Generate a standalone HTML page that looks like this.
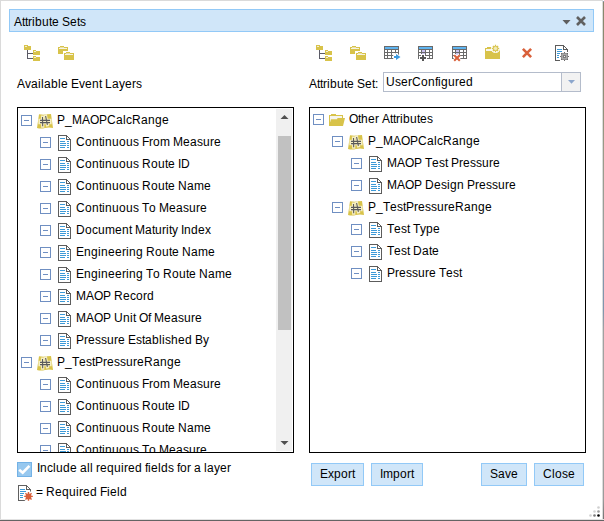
<!DOCTYPE html>
<html><head><meta charset="utf-8"><style>
html,body{margin:0;padding:0;width:604px;height:521px;overflow:hidden;background:#fff;position:relative}
.t i{display:inline-block;font-style:normal}
.t{position:absolute;font-family:"Liberation Sans",sans-serif;font-size:12px;line-height:14px;color:#000;white-space:nowrap}
.btn{position:absolute;top:463px;height:21px;border:1px solid #92c9f7;background:#d0e6f9;font-family:"Liberation Sans",sans-serif;font-size:12px;line-height:21px;text-align:center;color:#000}
svg{display:block}
</style></head><body>
<div style="position:absolute;left:0;top:0;width:604px;height:1px;background:#dadada"></div>
<div style="position:absolute;left:0;top:0;width:1px;height:521px;background:#dadada"></div>
<div style="position:absolute;left:602px;top:0;width:1px;height:521px;background:#dcdcdc"></div>
<div style="position:absolute;left:603px;top:0;width:1px;height:521px;background:linear-gradient(to bottom,#fff 0px,#fff 1px,#8898b0 1px,#8898b0 2px,#87876c 2px,#8f8f78 100px,#9a9a88 150px,#9aa0a0 240px,#8797aa 260px,#7f95ae 310px,#a0a0a0 330px,#a6a6a2 420px,#9a9a9a 500px,#707070 521px)"></div>
<div style="position:absolute;left:0;top:519px;width:604px;height:1px;background:#e2e2e2"></div>
<div style="position:absolute;left:0;top:520px;width:604px;height:1px;background:#646464"></div>
<div style="position:absolute;left:9px;top:9px;width:583px;height:21px;border:1px solid #92c9f7;background:#d0e6f9"></div>
<div class="t" style="left:14px;top:15px;"><i style="width:8px">A</i><i style="width:3px">t</i><i style="width:3px">t</i><i style="width:4px">r</i><i style="width:3px">i</i><i style="width:7px">b</i><i style="width:7px">u</i><i style="width:3px">t</i><i style="width:7px">e</i><i style="width:3px">&nbsp;</i><i style="width:8px">S</i><i style="width:7px">e</i><i style="width:3px">t</i><i style="width:6px">s</i></div>
<svg style="position:absolute;left:562px;top:20px" width="9" height="5" viewBox="0 0 9 5" shape-rendering="crispEdges" ><path d="M0.5 0 H8.5 L4.5 4.5 Z" fill="#5e5e5e" shape-rendering="auto"/></svg>
<svg style="position:absolute;left:575px;top:15px" width="12" height="12" viewBox="0 0 12 12"><path d="M2 2 L10 10 M10 2 L2 10" stroke="#606060" stroke-width="2.6"/></svg>
<svg style="position:absolute;left:24px;top:45px" width="17" height="16" viewBox="0 0 17 16" shape-rendering="crispEdges" ><rect x="0" y="0" width="4" height="1" fill="#d8c34a"/><rect x="0" y="1" width="7" height="4" fill="#d8c34a"/><rect x="1" y="1" width="2" height="1" fill="#f3eed2"/><rect x="3" y="5" width="1" height="9" fill="#5b5b66"/><rect x="4" y="8" width="5" height="1" fill="#5b5b66"/><rect x="4" y="13" width="5" height="1" fill="#5b5b66"/><rect x="9" y="5" width="3" height="1" fill="#d8c34a"/><rect x="9" y="6" width="7" height="4" fill="#d8c34a"/><rect x="10" y="6" width="2" height="1" fill="#f3eed2"/><rect x="9" y="11" width="3" height="1" fill="#d8c34a"/><rect x="9" y="12" width="7" height="4" fill="#d8c34a"/><rect x="10" y="12" width="2" height="1" fill="#f3eed2"/></svg>
<svg style="position:absolute;left:58px;top:46px" width="16" height="14" viewBox="0 0 16 14" shape-rendering="crispEdges" ><rect x="2" y="0" width="4" height="1" fill="#d8c34a"/><rect x="0" y="1" width="10" height="7" fill="#d8c34a"/><rect x="1" y="2" width="8" height="1" fill="#f6f3e4"/><rect x="2" y="1" width="4" height="1" fill="#e9e0a8"/><rect x="5" y="5" width="11" height="9" fill="#fff"/><rect x="8" y="6" width="4" height="1" fill="#d8c34a"/><rect x="6" y="7" width="10" height="7" fill="#d8c34a"/><rect x="7" y="8" width="8" height="1" fill="#f6f3e4"/><rect x="8" y="7" width="4" height="1" fill="#e9e0a8"/></svg>
<svg style="position:absolute;left:316px;top:45px" width="17" height="16" viewBox="0 0 17 16" shape-rendering="crispEdges" ><rect x="0" y="0" width="4" height="1" fill="#d8c34a"/><rect x="0" y="1" width="7" height="4" fill="#d8c34a"/><rect x="1" y="1" width="2" height="1" fill="#f3eed2"/><rect x="3" y="5" width="1" height="9" fill="#5b5b66"/><rect x="4" y="8" width="5" height="1" fill="#5b5b66"/><rect x="4" y="13" width="5" height="1" fill="#5b5b66"/><rect x="9" y="5" width="3" height="1" fill="#d8c34a"/><rect x="9" y="6" width="7" height="4" fill="#d8c34a"/><rect x="10" y="6" width="2" height="1" fill="#f3eed2"/><rect x="9" y="11" width="3" height="1" fill="#d8c34a"/><rect x="9" y="12" width="7" height="4" fill="#d8c34a"/><rect x="10" y="12" width="2" height="1" fill="#f3eed2"/></svg>
<svg style="position:absolute;left:350px;top:46px" width="16" height="14" viewBox="0 0 16 14" shape-rendering="crispEdges" ><rect x="2" y="0" width="4" height="1" fill="#d8c34a"/><rect x="0" y="1" width="10" height="7" fill="#d8c34a"/><rect x="1" y="2" width="8" height="1" fill="#f6f3e4"/><rect x="2" y="1" width="4" height="1" fill="#e9e0a8"/><rect x="5" y="5" width="11" height="9" fill="#fff"/><rect x="8" y="6" width="4" height="1" fill="#d8c34a"/><rect x="6" y="7" width="10" height="7" fill="#d8c34a"/><rect x="7" y="8" width="8" height="1" fill="#f6f3e4"/><rect x="8" y="7" width="4" height="1" fill="#e9e0a8"/></svg>
<svg style="position:absolute;left:384px;top:46px" width="15" height="13" viewBox="0 0 15 13" shape-rendering="crispEdges" ><rect x="0" y="0" width="15" height="13" fill="#6a6a6a"/><rect x="1" y="1" width="13" height="2" fill="#5fb4f0"/><rect x="1" y="4" width="2" height="2" fill="#ffffff"/><rect x="4" y="4" width="3" height="2" fill="#ffffff"/><rect x="8" y="4" width="3" height="2" fill="#ffffff"/><rect x="12" y="4" width="2" height="2" fill="#ffffff"/><rect x="1" y="7" width="2" height="2" fill="#ffffff"/><rect x="4" y="7" width="3" height="2" fill="#ffffff"/><rect x="8" y="7" width="3" height="2" fill="#ffffff"/><rect x="12" y="7" width="2" height="2" fill="#ffffff"/><rect x="1" y="10" width="2" height="2" fill="#ffffff"/><rect x="4" y="10" width="3" height="2" fill="#ffffff"/><rect x="8" y="10" width="3" height="2" fill="#ffffff"/><rect x="12" y="10" width="2" height="2" fill="#ffffff"/></svg>
<svg style="position:absolute;left:392px;top:52px" width="10" height="10" viewBox="0 0 10 10" shape-rendering="crispEdges" ><path d="M2 4 H4 V2 L8.5 5 L4 8 V6 H2 Z" fill="#fff" stroke="#fff" stroke-width="2" stroke-linejoin="round" shape-rendering="auto"/><path d="M2 4 H4 V2 L8.5 5 L4 8 V6 H2 Z" fill="#3b9ae0" shape-rendering="auto"/></svg>
<svg style="position:absolute;left:418px;top:46px" width="15" height="13" viewBox="0 0 15 13" shape-rendering="crispEdges" ><rect x="0" y="0" width="15" height="13" fill="#6a6a6a"/><rect x="1" y="1" width="13" height="2" fill="#5fb4f0"/><rect x="1" y="4" width="2" height="2" fill="#ffffff"/><rect x="4" y="4" width="3" height="2" fill="#cbc3ef"/><rect x="8" y="4" width="3" height="2" fill="#ffffff"/><rect x="12" y="4" width="2" height="2" fill="#ffffff"/><rect x="1" y="7" width="2" height="2" fill="#ffffff"/><rect x="4" y="7" width="3" height="2" fill="#cbc3ef"/><rect x="8" y="7" width="3" height="2" fill="#ffffff"/><rect x="12" y="7" width="2" height="2" fill="#ffffff"/><rect x="1" y="10" width="2" height="2" fill="#ffffff"/><rect x="4" y="10" width="3" height="2" fill="#ffffff"/><rect x="8" y="10" width="3" height="2" fill="#ffffff"/><rect x="12" y="10" width="2" height="2" fill="#ffffff"/></svg>
<svg style="position:absolute;left:419px;top:54px" width="8" height="8" viewBox="0 0 8 8" shape-rendering="crispEdges" ><rect x="0" y="2" width="8" height="4" fill="#fff"/><rect x="2" y="0" width="4" height="8" fill="#fff"/><rect x="1" y="3" width="6" height="2" fill="#555"/><rect x="3" y="1" width="2" height="6" fill="#555"/></svg>
<svg style="position:absolute;left:452px;top:46px" width="15" height="13" viewBox="0 0 15 13" shape-rendering="crispEdges" ><rect x="0" y="0" width="15" height="13" fill="#6a6a6a"/><rect x="1" y="1" width="13" height="2" fill="#5fb4f0"/><rect x="1" y="4" width="2" height="2" fill="#ffffff"/><rect x="4" y="4" width="3" height="2" fill="#cbc3ef"/><rect x="8" y="4" width="3" height="2" fill="#ffffff"/><rect x="12" y="4" width="2" height="2" fill="#ffffff"/><rect x="1" y="7" width="2" height="2" fill="#ffffff"/><rect x="4" y="7" width="3" height="2" fill="#cbc3ef"/><rect x="8" y="7" width="3" height="2" fill="#ffffff"/><rect x="12" y="7" width="2" height="2" fill="#ffffff"/><rect x="1" y="10" width="2" height="2" fill="#ffffff"/><rect x="4" y="10" width="3" height="2" fill="#ffffff"/><rect x="8" y="10" width="3" height="2" fill="#ffffff"/><rect x="12" y="10" width="2" height="2" fill="#ffffff"/></svg>
<svg style="position:absolute;left:453px;top:54px" width="8" height="8" viewBox="0 0 8 8"><path d="M1.2 1.2 L6.8 6.8 M6.8 1.2 L1.2 6.8" stroke="#fff" stroke-width="4.0" fill="none"/><path d="M1.2 1.2 L6.8 6.8 M6.8 1.2 L1.2 6.8" stroke="#d9603a" stroke-width="2.0" fill="none"/></svg>
<svg style="position:absolute;left:485px;top:47px;overflow:visible" width="15" height="12" viewBox="0 0 15 12"><path d="M0 1 H2 V0 H7 V1 H15 V12 H0 Z" fill="#d8c34a" shape-rendering="crispEdges"/><rect x="1" y="2" width="9" height="2" fill="#f7f6ee"/><circle cx="10.5" cy="1.5" r="4.6" fill="#fff"/><path d="M12.70 1.50 L14.20 1.50 M12.06 3.06 L13.12 4.12 M10.50 3.70 L10.50 5.20 M8.94 3.06 L7.88 4.12 M8.30 1.50 L6.80 1.50 M8.94 -0.06 L7.88 -1.12 M10.50 -0.70 L10.50 -2.20 M12.06 -0.06 L13.12 -1.12 " stroke="#d8c34a" stroke-width="1.3" fill="none"/><circle cx="10.5" cy="1.5" r="2.2" fill="#f1eab8" stroke="#d8c34a" stroke-width="1"/></svg>
<svg style="position:absolute;left:521px;top:47px" width="12" height="12" viewBox="0 0 12 12"><path d="M1.9 1.9 L10.1 10.1 M10.1 1.9 L1.9 10.1" stroke="#d9603a" stroke-width="2.6" fill="none"/></svg>
<svg style="position:absolute;left:555px;top:45px;overflow:visible" width="15" height="17" viewBox="0 0 15 17"><path d="M0 0 H8 L13 5 V16 H0 Z" fill="#fff" shape-rendering="crispEdges"/><g shape-rendering="crispEdges"><rect x="0" y="0" width="1" height="16" fill="#5c5c5c"/><rect x="0" y="15" width="13" height="1" fill="#5c5c5c"/><rect x="0" y="0" width="9" height="1" fill="#5c5c5c"/><rect x="12" y="4" width="1" height="12" fill="#5c5c5c"/><rect x="8" y="0" width="1" height="5" fill="#5c5c5c"/><rect x="8" y="4" width="5" height="1" fill="#5c5c5c"/></g><path d="M8.5 0.5 L12.5 4.5" stroke="#5c5c5c" stroke-width="1" fill="none" shape-rendering="auto"/><rect x="2" y="4" width="5" height="1" fill="#3d9ad8"/><rect x="2" y="6" width="6" height="1" fill="#3d9ad8"/><rect x="2" y="8" width="3" height="1" fill="#3d9ad8"/><rect x="2" y="10" width="2" height="1" fill="#3d9ad8"/><rect x="2" y="12" width="2" height="1" fill="#3d9ad8"/><g shape-rendering="crispEdges"><rect x="5" y="7" width="9" height="9" fill="#fff"/><rect x="4" y="9" width="11" height="5" fill="#fff"/><rect x="7" y="6" width="5" height="11" fill="#fff"/><rect x="6" y="8" width="7" height="7" fill="#a9a9a9"/><rect x="6" y="8" width="7" height="1" fill="#909090"/><rect x="6" y="14" width="7" height="1" fill="#909090"/><rect x="6" y="8" width="1" height="7" fill="#909090"/><rect x="12" y="8" width="1" height="7" fill="#909090"/><rect x="9" y="7" width="1" height="1" fill="#6a6a6a"/><rect x="9" y="15" width="1" height="1" fill="#6a6a6a"/><rect x="5" y="11" width="1" height="1" fill="#6a6a6a"/><rect x="13" y="11" width="1" height="1" fill="#6a6a6a"/><rect x="6" y="8" width="1" height="1" fill="#6a6a6a"/><rect x="12" y="8" width="1" height="1" fill="#6a6a6a"/><rect x="6" y="14" width="1" height="1" fill="#6a6a6a"/><rect x="12" y="14" width="1" height="1" fill="#6a6a6a"/><rect x="8" y="10" width="3" height="3" fill="#7c7c7c"/><rect x="9" y="11" width="1" height="1" fill="#f4f4f4"/></g></svg>
<div class="t" style="left:17px;top:77px;"><i style="width:8px">A</i><i style="width:6px">v</i><i style="width:7px">a</i><i style="width:3px">i</i><i style="width:3px">l</i><i style="width:7px">a</i><i style="width:7px">b</i><i style="width:3px">l</i><i style="width:7px">e</i><i style="width:3px">&nbsp;</i><i style="width:8px">E</i><i style="width:6px">v</i><i style="width:7px">e</i><i style="width:7px">n</i><i style="width:3px">t</i><i style="width:3px">&nbsp;</i><i style="width:7px">L</i><i style="width:7px">a</i><i style="width:6px">y</i><i style="width:7px">e</i><i style="width:4px">r</i><i style="width:6px">s</i></div>
<div class="t" style="left:309px;top:77px;"><i style="width:8px">A</i><i style="width:3px">t</i><i style="width:3px">t</i><i style="width:4px">r</i><i style="width:3px">i</i><i style="width:7px">b</i><i style="width:7px">u</i><i style="width:3px">t</i><i style="width:7px">e</i><i style="width:3px">&nbsp;</i><i style="width:8px">S</i><i style="width:7px">e</i><i style="width:3px">t</i><i style="width:3px">:</i></div>
<div style="position:absolute;left:383px;top:72px;width:196px;height:18px;border:1px solid #b4bccb;background:#fff"></div>
<div style="position:absolute;left:561px;top:73px;width:1px;height:18px;background:#b4bccb"></div>
<div style="position:absolute;left:562px;top:73px;width:18px;height:18px;background:#f2f2f2"></div>
<svg style="position:absolute;left:568px;top:80px" width="8" height="4" viewBox="0 0 8 4" shape-rendering="crispEdges" ><path d="M0 0 H7 L3.5 3.8 Z" fill="#8ca6cc" shape-rendering="auto"/></svg>
<div class="t" style="left:386px;top:75px;"><i style="width:9px">U</i><i style="width:6px">s</i><i style="width:7px">e</i><i style="width:4px">r</i><i style="width:9px">C</i><i style="width:7px">o</i><i style="width:7px">n</i><i style="width:3px">f</i><i style="width:3px">i</i><i style="width:7px">g</i><i style="width:7px">u</i><i style="width:4px">r</i><i style="width:7px">e</i><i style="width:7px">d</i></div>
<div style="position:absolute;left:17px;top:107px;width:275px;height:344px;border:1px solid #000;background:#fff"></div>
<div style="position:absolute;left:18px;top:108px;width:275px;height:344px;overflow:hidden"><svg style="position:absolute;left:3px;top:7px" width="11" height="11" viewBox="0 0 11 11" shape-rendering="crispEdges" ><rect x="0.5" y="0.5" width="10" height="10" fill="#fff" stroke="#6f8fc2" stroke-width="1"/><rect x="3" y="5" width="5" height="1" fill="#6f8fc2"/></svg><svg style="position:absolute;left:19px;top:6px" width="17" height="15" viewBox="0 0 17 15" shape-rendering="crispEdges" ><path d="M2 0.3 Q6 1 8 0.6 T14 0 L16 14 Q12 13 8 14 T0 14 Z" fill="#d8c34a" shape-rendering="auto"/><path d="M5.5 3 L5.7 12.2 M8.6 2 L10.4 10.8 M3 6.4 H13 M3 8.6 H13" stroke="#f5eec4" stroke-width="3.2" fill="none" stroke-linecap="square" shape-rendering="auto"/><path d="M5.5 3 L5.7 12.2 M8.6 2 L10.4 10.8 M3 6.4 H13 M3 8.6 H13" stroke="#5a5a5a" stroke-width="1.1" fill="none" shape-rendering="auto"/></svg><div class="t" style="left:39px;top:5px;"><i style="width:8px">P</i><i style="width:7px">_</i><i style="width:10px">M</i><i style="width:8px">A</i><i style="width:9px">O</i><i style="width:8px">P</i><i style="width:9px">C</i><i style="width:7px">a</i><i style="width:3px">l</i><i style="width:6px">c</i><i style="width:9px">R</i><i style="width:7px">a</i><i style="width:7px">n</i><i style="width:7px">g</i><i style="width:7px">e</i></div><svg style="position:absolute;left:22px;top:29px" width="11" height="11" viewBox="0 0 11 11" shape-rendering="crispEdges" ><rect x="0.5" y="0.5" width="10" height="10" fill="#fff" stroke="#6f8fc2" stroke-width="1"/><rect x="3" y="5" width="5" height="1" fill="#6f8fc2"/></svg><svg style="position:absolute;left:40px;top:27px" width="13" height="16" viewBox="0 0 13 16" shape-rendering="crispEdges" ><path d="M0 0 H8 L13 5 V16 H0 Z" fill="#fff" shape-rendering="crispEdges"/><g shape-rendering="crispEdges"><rect x="0" y="0" width="1" height="16" fill="#5c5c5c"/><rect x="0" y="15" width="13" height="1" fill="#5c5c5c"/><rect x="0" y="0" width="9" height="1" fill="#5c5c5c"/><rect x="12" y="4" width="1" height="12" fill="#5c5c5c"/><rect x="8" y="0" width="1" height="5" fill="#5c5c5c"/><rect x="8" y="4" width="5" height="1" fill="#5c5c5c"/></g><path d="M8.5 0.5 L12.5 4.5" stroke="#5c5c5c" stroke-width="1" fill="none" shape-rendering="auto"/><rect x="2" y="3" width="5" height="1" fill="#3d9ad8"/><rect x="2" y="6" width="5" height="1" fill="#3d9ad8"/><rect x="2" y="8" width="6" height="1" fill="#3d9ad8"/><rect x="2" y="10" width="6" height="1" fill="#3d9ad8"/><rect x="2" y="12" width="5" height="1" fill="#3d9ad8"/><rect x="9" y="6" width="2" height="1" fill="#3d9ad8"/><rect x="9" y="8" width="2" height="1" fill="#3d9ad8"/><rect x="9" y="10" width="2" height="1" fill="#3d9ad8"/><rect x="9" y="12" width="2" height="1" fill="#3d9ad8"/></svg><div class="t" style="left:58px;top:27px;"><i style="width:9px">C</i><i style="width:7px">o</i><i style="width:7px">n</i><i style="width:3px">t</i><i style="width:3px">i</i><i style="width:7px">n</i><i style="width:7px">u</i><i style="width:7px">o</i><i style="width:7px">u</i><i style="width:6px">s</i><i style="width:3px">&nbsp;</i><i style="width:7px">F</i><i style="width:4px">r</i><i style="width:7px">o</i><i style="width:10px">m</i><i style="width:3px">&nbsp;</i><i style="width:10px">M</i><i style="width:7px">e</i><i style="width:7px">a</i><i style="width:6px">s</i><i style="width:7px">u</i><i style="width:4px">r</i><i style="width:7px">e</i></div><svg style="position:absolute;left:22px;top:51px" width="11" height="11" viewBox="0 0 11 11" shape-rendering="crispEdges" ><rect x="0.5" y="0.5" width="10" height="10" fill="#fff" stroke="#6f8fc2" stroke-width="1"/><rect x="3" y="5" width="5" height="1" fill="#6f8fc2"/></svg><svg style="position:absolute;left:40px;top:49px" width="13" height="16" viewBox="0 0 13 16" shape-rendering="crispEdges" ><path d="M0 0 H8 L13 5 V16 H0 Z" fill="#fff" shape-rendering="crispEdges"/><g shape-rendering="crispEdges"><rect x="0" y="0" width="1" height="16" fill="#5c5c5c"/><rect x="0" y="15" width="13" height="1" fill="#5c5c5c"/><rect x="0" y="0" width="9" height="1" fill="#5c5c5c"/><rect x="12" y="4" width="1" height="12" fill="#5c5c5c"/><rect x="8" y="0" width="1" height="5" fill="#5c5c5c"/><rect x="8" y="4" width="5" height="1" fill="#5c5c5c"/></g><path d="M8.5 0.5 L12.5 4.5" stroke="#5c5c5c" stroke-width="1" fill="none" shape-rendering="auto"/><rect x="2" y="3" width="5" height="1" fill="#3d9ad8"/><rect x="2" y="6" width="5" height="1" fill="#3d9ad8"/><rect x="2" y="8" width="6" height="1" fill="#3d9ad8"/><rect x="2" y="10" width="6" height="1" fill="#3d9ad8"/><rect x="2" y="12" width="5" height="1" fill="#3d9ad8"/><rect x="9" y="6" width="2" height="1" fill="#3d9ad8"/><rect x="9" y="8" width="2" height="1" fill="#3d9ad8"/><rect x="9" y="10" width="2" height="1" fill="#3d9ad8"/><rect x="9" y="12" width="2" height="1" fill="#3d9ad8"/></svg><div class="t" style="left:58px;top:49px;"><i style="width:9px">C</i><i style="width:7px">o</i><i style="width:7px">n</i><i style="width:3px">t</i><i style="width:3px">i</i><i style="width:7px">n</i><i style="width:7px">u</i><i style="width:7px">o</i><i style="width:7px">u</i><i style="width:6px">s</i><i style="width:3px">&nbsp;</i><i style="width:9px">R</i><i style="width:7px">o</i><i style="width:7px">u</i><i style="width:3px">t</i><i style="width:7px">e</i><i style="width:3px">&nbsp;</i><i style="width:3px">I</i><i style="width:9px">D</i></div><svg style="position:absolute;left:22px;top:73px" width="11" height="11" viewBox="0 0 11 11" shape-rendering="crispEdges" ><rect x="0.5" y="0.5" width="10" height="10" fill="#fff" stroke="#6f8fc2" stroke-width="1"/><rect x="3" y="5" width="5" height="1" fill="#6f8fc2"/></svg><svg style="position:absolute;left:40px;top:71px" width="13" height="16" viewBox="0 0 13 16" shape-rendering="crispEdges" ><path d="M0 0 H8 L13 5 V16 H0 Z" fill="#fff" shape-rendering="crispEdges"/><g shape-rendering="crispEdges"><rect x="0" y="0" width="1" height="16" fill="#5c5c5c"/><rect x="0" y="15" width="13" height="1" fill="#5c5c5c"/><rect x="0" y="0" width="9" height="1" fill="#5c5c5c"/><rect x="12" y="4" width="1" height="12" fill="#5c5c5c"/><rect x="8" y="0" width="1" height="5" fill="#5c5c5c"/><rect x="8" y="4" width="5" height="1" fill="#5c5c5c"/></g><path d="M8.5 0.5 L12.5 4.5" stroke="#5c5c5c" stroke-width="1" fill="none" shape-rendering="auto"/><rect x="2" y="3" width="5" height="1" fill="#3d9ad8"/><rect x="2" y="6" width="5" height="1" fill="#3d9ad8"/><rect x="2" y="8" width="6" height="1" fill="#3d9ad8"/><rect x="2" y="10" width="6" height="1" fill="#3d9ad8"/><rect x="2" y="12" width="5" height="1" fill="#3d9ad8"/><rect x="9" y="6" width="2" height="1" fill="#3d9ad8"/><rect x="9" y="8" width="2" height="1" fill="#3d9ad8"/><rect x="9" y="10" width="2" height="1" fill="#3d9ad8"/><rect x="9" y="12" width="2" height="1" fill="#3d9ad8"/></svg><div class="t" style="left:58px;top:71px;"><i style="width:9px">C</i><i style="width:7px">o</i><i style="width:7px">n</i><i style="width:3px">t</i><i style="width:3px">i</i><i style="width:7px">n</i><i style="width:7px">u</i><i style="width:7px">o</i><i style="width:7px">u</i><i style="width:6px">s</i><i style="width:3px">&nbsp;</i><i style="width:9px">R</i><i style="width:7px">o</i><i style="width:7px">u</i><i style="width:3px">t</i><i style="width:7px">e</i><i style="width:3px">&nbsp;</i><i style="width:9px">N</i><i style="width:7px">a</i><i style="width:10px">m</i><i style="width:7px">e</i></div><svg style="position:absolute;left:22px;top:95px" width="11" height="11" viewBox="0 0 11 11" shape-rendering="crispEdges" ><rect x="0.5" y="0.5" width="10" height="10" fill="#fff" stroke="#6f8fc2" stroke-width="1"/><rect x="3" y="5" width="5" height="1" fill="#6f8fc2"/></svg><svg style="position:absolute;left:40px;top:93px" width="13" height="16" viewBox="0 0 13 16" shape-rendering="crispEdges" ><path d="M0 0 H8 L13 5 V16 H0 Z" fill="#fff" shape-rendering="crispEdges"/><g shape-rendering="crispEdges"><rect x="0" y="0" width="1" height="16" fill="#5c5c5c"/><rect x="0" y="15" width="13" height="1" fill="#5c5c5c"/><rect x="0" y="0" width="9" height="1" fill="#5c5c5c"/><rect x="12" y="4" width="1" height="12" fill="#5c5c5c"/><rect x="8" y="0" width="1" height="5" fill="#5c5c5c"/><rect x="8" y="4" width="5" height="1" fill="#5c5c5c"/></g><path d="M8.5 0.5 L12.5 4.5" stroke="#5c5c5c" stroke-width="1" fill="none" shape-rendering="auto"/><rect x="2" y="3" width="5" height="1" fill="#3d9ad8"/><rect x="2" y="6" width="5" height="1" fill="#3d9ad8"/><rect x="2" y="8" width="6" height="1" fill="#3d9ad8"/><rect x="2" y="10" width="6" height="1" fill="#3d9ad8"/><rect x="2" y="12" width="5" height="1" fill="#3d9ad8"/><rect x="9" y="6" width="2" height="1" fill="#3d9ad8"/><rect x="9" y="8" width="2" height="1" fill="#3d9ad8"/><rect x="9" y="10" width="2" height="1" fill="#3d9ad8"/><rect x="9" y="12" width="2" height="1" fill="#3d9ad8"/></svg><div class="t" style="left:58px;top:93px;"><i style="width:9px">C</i><i style="width:7px">o</i><i style="width:7px">n</i><i style="width:3px">t</i><i style="width:3px">i</i><i style="width:7px">n</i><i style="width:7px">u</i><i style="width:7px">o</i><i style="width:7px">u</i><i style="width:6px">s</i><i style="width:3px">&nbsp;</i><i style="width:7px">T</i><i style="width:7px">o</i><i style="width:3px">&nbsp;</i><i style="width:10px">M</i><i style="width:7px">e</i><i style="width:7px">a</i><i style="width:6px">s</i><i style="width:7px">u</i><i style="width:4px">r</i><i style="width:7px">e</i></div><svg style="position:absolute;left:22px;top:117px" width="11" height="11" viewBox="0 0 11 11" shape-rendering="crispEdges" ><rect x="0.5" y="0.5" width="10" height="10" fill="#fff" stroke="#6f8fc2" stroke-width="1"/><rect x="3" y="5" width="5" height="1" fill="#6f8fc2"/></svg><svg style="position:absolute;left:40px;top:115px" width="13" height="16" viewBox="0 0 13 16" shape-rendering="crispEdges" ><path d="M0 0 H8 L13 5 V16 H0 Z" fill="#fff" shape-rendering="crispEdges"/><g shape-rendering="crispEdges"><rect x="0" y="0" width="1" height="16" fill="#5c5c5c"/><rect x="0" y="15" width="13" height="1" fill="#5c5c5c"/><rect x="0" y="0" width="9" height="1" fill="#5c5c5c"/><rect x="12" y="4" width="1" height="12" fill="#5c5c5c"/><rect x="8" y="0" width="1" height="5" fill="#5c5c5c"/><rect x="8" y="4" width="5" height="1" fill="#5c5c5c"/></g><path d="M8.5 0.5 L12.5 4.5" stroke="#5c5c5c" stroke-width="1" fill="none" shape-rendering="auto"/><rect x="2" y="3" width="5" height="1" fill="#3d9ad8"/><rect x="2" y="6" width="5" height="1" fill="#3d9ad8"/><rect x="2" y="8" width="6" height="1" fill="#3d9ad8"/><rect x="2" y="10" width="6" height="1" fill="#3d9ad8"/><rect x="2" y="12" width="5" height="1" fill="#3d9ad8"/><rect x="9" y="6" width="2" height="1" fill="#3d9ad8"/><rect x="9" y="8" width="2" height="1" fill="#3d9ad8"/><rect x="9" y="10" width="2" height="1" fill="#3d9ad8"/><rect x="9" y="12" width="2" height="1" fill="#3d9ad8"/></svg><div class="t" style="left:58px;top:115px;"><i style="width:9px">D</i><i style="width:7px">o</i><i style="width:6px">c</i><i style="width:7px">u</i><i style="width:10px">m</i><i style="width:7px">e</i><i style="width:7px">n</i><i style="width:3px">t</i><i style="width:3px">&nbsp;</i><i style="width:10px">M</i><i style="width:7px">a</i><i style="width:3px">t</i><i style="width:7px">u</i><i style="width:4px">r</i><i style="width:3px">i</i><i style="width:3px">t</i><i style="width:6px">y</i><i style="width:3px">&nbsp;</i><i style="width:3px">I</i><i style="width:7px">n</i><i style="width:7px">d</i><i style="width:7px">e</i><i style="width:6px">x</i></div><svg style="position:absolute;left:22px;top:139px" width="11" height="11" viewBox="0 0 11 11" shape-rendering="crispEdges" ><rect x="0.5" y="0.5" width="10" height="10" fill="#fff" stroke="#6f8fc2" stroke-width="1"/><rect x="3" y="5" width="5" height="1" fill="#6f8fc2"/></svg><svg style="position:absolute;left:40px;top:137px" width="13" height="16" viewBox="0 0 13 16" shape-rendering="crispEdges" ><path d="M0 0 H8 L13 5 V16 H0 Z" fill="#fff" shape-rendering="crispEdges"/><g shape-rendering="crispEdges"><rect x="0" y="0" width="1" height="16" fill="#5c5c5c"/><rect x="0" y="15" width="13" height="1" fill="#5c5c5c"/><rect x="0" y="0" width="9" height="1" fill="#5c5c5c"/><rect x="12" y="4" width="1" height="12" fill="#5c5c5c"/><rect x="8" y="0" width="1" height="5" fill="#5c5c5c"/><rect x="8" y="4" width="5" height="1" fill="#5c5c5c"/></g><path d="M8.5 0.5 L12.5 4.5" stroke="#5c5c5c" stroke-width="1" fill="none" shape-rendering="auto"/><rect x="2" y="3" width="5" height="1" fill="#3d9ad8"/><rect x="2" y="6" width="5" height="1" fill="#3d9ad8"/><rect x="2" y="8" width="6" height="1" fill="#3d9ad8"/><rect x="2" y="10" width="6" height="1" fill="#3d9ad8"/><rect x="2" y="12" width="5" height="1" fill="#3d9ad8"/><rect x="9" y="6" width="2" height="1" fill="#3d9ad8"/><rect x="9" y="8" width="2" height="1" fill="#3d9ad8"/><rect x="9" y="10" width="2" height="1" fill="#3d9ad8"/><rect x="9" y="12" width="2" height="1" fill="#3d9ad8"/></svg><div class="t" style="left:58px;top:137px;"><i style="width:8px">E</i><i style="width:7px">n</i><i style="width:7px">g</i><i style="width:3px">i</i><i style="width:7px">n</i><i style="width:7px">e</i><i style="width:7px">e</i><i style="width:4px">r</i><i style="width:3px">i</i><i style="width:7px">n</i><i style="width:7px">g</i><i style="width:3px">&nbsp;</i><i style="width:9px">R</i><i style="width:7px">o</i><i style="width:7px">u</i><i style="width:3px">t</i><i style="width:7px">e</i><i style="width:3px">&nbsp;</i><i style="width:9px">N</i><i style="width:7px">a</i><i style="width:10px">m</i><i style="width:7px">e</i></div><svg style="position:absolute;left:22px;top:161px" width="11" height="11" viewBox="0 0 11 11" shape-rendering="crispEdges" ><rect x="0.5" y="0.5" width="10" height="10" fill="#fff" stroke="#6f8fc2" stroke-width="1"/><rect x="3" y="5" width="5" height="1" fill="#6f8fc2"/></svg><svg style="position:absolute;left:40px;top:159px" width="13" height="16" viewBox="0 0 13 16" shape-rendering="crispEdges" ><path d="M0 0 H8 L13 5 V16 H0 Z" fill="#fff" shape-rendering="crispEdges"/><g shape-rendering="crispEdges"><rect x="0" y="0" width="1" height="16" fill="#5c5c5c"/><rect x="0" y="15" width="13" height="1" fill="#5c5c5c"/><rect x="0" y="0" width="9" height="1" fill="#5c5c5c"/><rect x="12" y="4" width="1" height="12" fill="#5c5c5c"/><rect x="8" y="0" width="1" height="5" fill="#5c5c5c"/><rect x="8" y="4" width="5" height="1" fill="#5c5c5c"/></g><path d="M8.5 0.5 L12.5 4.5" stroke="#5c5c5c" stroke-width="1" fill="none" shape-rendering="auto"/><rect x="2" y="3" width="5" height="1" fill="#3d9ad8"/><rect x="2" y="6" width="5" height="1" fill="#3d9ad8"/><rect x="2" y="8" width="6" height="1" fill="#3d9ad8"/><rect x="2" y="10" width="6" height="1" fill="#3d9ad8"/><rect x="2" y="12" width="5" height="1" fill="#3d9ad8"/><rect x="9" y="6" width="2" height="1" fill="#3d9ad8"/><rect x="9" y="8" width="2" height="1" fill="#3d9ad8"/><rect x="9" y="10" width="2" height="1" fill="#3d9ad8"/><rect x="9" y="12" width="2" height="1" fill="#3d9ad8"/></svg><div class="t" style="left:58px;top:159px;"><i style="width:8px">E</i><i style="width:7px">n</i><i style="width:7px">g</i><i style="width:3px">i</i><i style="width:7px">n</i><i style="width:7px">e</i><i style="width:7px">e</i><i style="width:4px">r</i><i style="width:3px">i</i><i style="width:7px">n</i><i style="width:7px">g</i><i style="width:3px">&nbsp;</i><i style="width:7px">T</i><i style="width:7px">o</i><i style="width:3px">&nbsp;</i><i style="width:9px">R</i><i style="width:7px">o</i><i style="width:7px">u</i><i style="width:3px">t</i><i style="width:7px">e</i><i style="width:3px">&nbsp;</i><i style="width:9px">N</i><i style="width:7px">a</i><i style="width:10px">m</i><i style="width:7px">e</i></div><svg style="position:absolute;left:22px;top:183px" width="11" height="11" viewBox="0 0 11 11" shape-rendering="crispEdges" ><rect x="0.5" y="0.5" width="10" height="10" fill="#fff" stroke="#6f8fc2" stroke-width="1"/><rect x="3" y="5" width="5" height="1" fill="#6f8fc2"/></svg><svg style="position:absolute;left:40px;top:181px" width="13" height="16" viewBox="0 0 13 16" shape-rendering="crispEdges" ><path d="M0 0 H8 L13 5 V16 H0 Z" fill="#fff" shape-rendering="crispEdges"/><g shape-rendering="crispEdges"><rect x="0" y="0" width="1" height="16" fill="#5c5c5c"/><rect x="0" y="15" width="13" height="1" fill="#5c5c5c"/><rect x="0" y="0" width="9" height="1" fill="#5c5c5c"/><rect x="12" y="4" width="1" height="12" fill="#5c5c5c"/><rect x="8" y="0" width="1" height="5" fill="#5c5c5c"/><rect x="8" y="4" width="5" height="1" fill="#5c5c5c"/></g><path d="M8.5 0.5 L12.5 4.5" stroke="#5c5c5c" stroke-width="1" fill="none" shape-rendering="auto"/><rect x="2" y="3" width="5" height="1" fill="#3d9ad8"/><rect x="2" y="6" width="5" height="1" fill="#3d9ad8"/><rect x="2" y="8" width="6" height="1" fill="#3d9ad8"/><rect x="2" y="10" width="6" height="1" fill="#3d9ad8"/><rect x="2" y="12" width="5" height="1" fill="#3d9ad8"/><rect x="9" y="6" width="2" height="1" fill="#3d9ad8"/><rect x="9" y="8" width="2" height="1" fill="#3d9ad8"/><rect x="9" y="10" width="2" height="1" fill="#3d9ad8"/><rect x="9" y="12" width="2" height="1" fill="#3d9ad8"/></svg><div class="t" style="left:58px;top:181px;"><i style="width:10px">M</i><i style="width:8px">A</i><i style="width:9px">O</i><i style="width:8px">P</i><i style="width:3px">&nbsp;</i><i style="width:9px">R</i><i style="width:7px">e</i><i style="width:6px">c</i><i style="width:7px">o</i><i style="width:4px">r</i><i style="width:7px">d</i></div><svg style="position:absolute;left:22px;top:205px" width="11" height="11" viewBox="0 0 11 11" shape-rendering="crispEdges" ><rect x="0.5" y="0.5" width="10" height="10" fill="#fff" stroke="#6f8fc2" stroke-width="1"/><rect x="3" y="5" width="5" height="1" fill="#6f8fc2"/></svg><svg style="position:absolute;left:40px;top:203px" width="13" height="16" viewBox="0 0 13 16" shape-rendering="crispEdges" ><path d="M0 0 H8 L13 5 V16 H0 Z" fill="#fff" shape-rendering="crispEdges"/><g shape-rendering="crispEdges"><rect x="0" y="0" width="1" height="16" fill="#5c5c5c"/><rect x="0" y="15" width="13" height="1" fill="#5c5c5c"/><rect x="0" y="0" width="9" height="1" fill="#5c5c5c"/><rect x="12" y="4" width="1" height="12" fill="#5c5c5c"/><rect x="8" y="0" width="1" height="5" fill="#5c5c5c"/><rect x="8" y="4" width="5" height="1" fill="#5c5c5c"/></g><path d="M8.5 0.5 L12.5 4.5" stroke="#5c5c5c" stroke-width="1" fill="none" shape-rendering="auto"/><rect x="2" y="3" width="5" height="1" fill="#3d9ad8"/><rect x="2" y="6" width="5" height="1" fill="#3d9ad8"/><rect x="2" y="8" width="6" height="1" fill="#3d9ad8"/><rect x="2" y="10" width="6" height="1" fill="#3d9ad8"/><rect x="2" y="12" width="5" height="1" fill="#3d9ad8"/><rect x="9" y="6" width="2" height="1" fill="#3d9ad8"/><rect x="9" y="8" width="2" height="1" fill="#3d9ad8"/><rect x="9" y="10" width="2" height="1" fill="#3d9ad8"/><rect x="9" y="12" width="2" height="1" fill="#3d9ad8"/></svg><div class="t" style="left:58px;top:203px;"><i style="width:10px">M</i><i style="width:8px">A</i><i style="width:9px">O</i><i style="width:8px">P</i><i style="width:3px">&nbsp;</i><i style="width:9px">U</i><i style="width:7px">n</i><i style="width:3px">i</i><i style="width:3px">t</i><i style="width:3px">&nbsp;</i><i style="width:9px">O</i><i style="width:3px">f</i><i style="width:3px">&nbsp;</i><i style="width:10px">M</i><i style="width:7px">e</i><i style="width:7px">a</i><i style="width:6px">s</i><i style="width:7px">u</i><i style="width:4px">r</i><i style="width:7px">e</i></div><svg style="position:absolute;left:22px;top:227px" width="11" height="11" viewBox="0 0 11 11" shape-rendering="crispEdges" ><rect x="0.5" y="0.5" width="10" height="10" fill="#fff" stroke="#6f8fc2" stroke-width="1"/><rect x="3" y="5" width="5" height="1" fill="#6f8fc2"/></svg><svg style="position:absolute;left:40px;top:225px" width="13" height="16" viewBox="0 0 13 16" shape-rendering="crispEdges" ><path d="M0 0 H8 L13 5 V16 H0 Z" fill="#fff" shape-rendering="crispEdges"/><g shape-rendering="crispEdges"><rect x="0" y="0" width="1" height="16" fill="#5c5c5c"/><rect x="0" y="15" width="13" height="1" fill="#5c5c5c"/><rect x="0" y="0" width="9" height="1" fill="#5c5c5c"/><rect x="12" y="4" width="1" height="12" fill="#5c5c5c"/><rect x="8" y="0" width="1" height="5" fill="#5c5c5c"/><rect x="8" y="4" width="5" height="1" fill="#5c5c5c"/></g><path d="M8.5 0.5 L12.5 4.5" stroke="#5c5c5c" stroke-width="1" fill="none" shape-rendering="auto"/><rect x="2" y="3" width="5" height="1" fill="#3d9ad8"/><rect x="2" y="6" width="5" height="1" fill="#3d9ad8"/><rect x="2" y="8" width="6" height="1" fill="#3d9ad8"/><rect x="2" y="10" width="6" height="1" fill="#3d9ad8"/><rect x="2" y="12" width="5" height="1" fill="#3d9ad8"/><rect x="9" y="6" width="2" height="1" fill="#3d9ad8"/><rect x="9" y="8" width="2" height="1" fill="#3d9ad8"/><rect x="9" y="10" width="2" height="1" fill="#3d9ad8"/><rect x="9" y="12" width="2" height="1" fill="#3d9ad8"/></svg><div class="t" style="left:58px;top:225px;"><i style="width:8px">P</i><i style="width:4px">r</i><i style="width:7px">e</i><i style="width:6px">s</i><i style="width:6px">s</i><i style="width:7px">u</i><i style="width:4px">r</i><i style="width:7px">e</i><i style="width:3px">&nbsp;</i><i style="width:8px">E</i><i style="width:6px">s</i><i style="width:3px">t</i><i style="width:7px">a</i><i style="width:7px">b</i><i style="width:3px">l</i><i style="width:3px">i</i><i style="width:6px">s</i><i style="width:7px">h</i><i style="width:7px">e</i><i style="width:7px">d</i><i style="width:3px">&nbsp;</i><i style="width:8px">B</i><i style="width:6px">y</i></div><svg style="position:absolute;left:3px;top:249px" width="11" height="11" viewBox="0 0 11 11" shape-rendering="crispEdges" ><rect x="0.5" y="0.5" width="10" height="10" fill="#fff" stroke="#6f8fc2" stroke-width="1"/><rect x="3" y="5" width="5" height="1" fill="#6f8fc2"/></svg><svg style="position:absolute;left:19px;top:248px" width="17" height="15" viewBox="0 0 17 15" shape-rendering="crispEdges" ><path d="M2 0.3 Q6 1 8 0.6 T14 0 L16 14 Q12 13 8 14 T0 14 Z" fill="#d8c34a" shape-rendering="auto"/><path d="M5.5 3 L5.7 12.2 M8.6 2 L10.4 10.8 M3 6.4 H13 M3 8.6 H13" stroke="#f5eec4" stroke-width="3.2" fill="none" stroke-linecap="square" shape-rendering="auto"/><path d="M5.5 3 L5.7 12.2 M8.6 2 L10.4 10.8 M3 6.4 H13 M3 8.6 H13" stroke="#5a5a5a" stroke-width="1.1" fill="none" shape-rendering="auto"/></svg><div class="t" style="left:39px;top:247px;"><i style="width:8px">P</i><i style="width:7px">_</i><i style="width:7px">T</i><i style="width:7px">e</i><i style="width:6px">s</i><i style="width:3px">t</i><i style="width:8px">P</i><i style="width:4px">r</i><i style="width:7px">e</i><i style="width:6px">s</i><i style="width:6px">s</i><i style="width:7px">u</i><i style="width:4px">r</i><i style="width:7px">e</i><i style="width:9px">R</i><i style="width:7px">a</i><i style="width:7px">n</i><i style="width:7px">g</i><i style="width:7px">e</i></div><svg style="position:absolute;left:22px;top:271px" width="11" height="11" viewBox="0 0 11 11" shape-rendering="crispEdges" ><rect x="0.5" y="0.5" width="10" height="10" fill="#fff" stroke="#6f8fc2" stroke-width="1"/><rect x="3" y="5" width="5" height="1" fill="#6f8fc2"/></svg><svg style="position:absolute;left:40px;top:269px" width="13" height="16" viewBox="0 0 13 16" shape-rendering="crispEdges" ><path d="M0 0 H8 L13 5 V16 H0 Z" fill="#fff" shape-rendering="crispEdges"/><g shape-rendering="crispEdges"><rect x="0" y="0" width="1" height="16" fill="#5c5c5c"/><rect x="0" y="15" width="13" height="1" fill="#5c5c5c"/><rect x="0" y="0" width="9" height="1" fill="#5c5c5c"/><rect x="12" y="4" width="1" height="12" fill="#5c5c5c"/><rect x="8" y="0" width="1" height="5" fill="#5c5c5c"/><rect x="8" y="4" width="5" height="1" fill="#5c5c5c"/></g><path d="M8.5 0.5 L12.5 4.5" stroke="#5c5c5c" stroke-width="1" fill="none" shape-rendering="auto"/><rect x="2" y="3" width="5" height="1" fill="#3d9ad8"/><rect x="2" y="6" width="5" height="1" fill="#3d9ad8"/><rect x="2" y="8" width="6" height="1" fill="#3d9ad8"/><rect x="2" y="10" width="6" height="1" fill="#3d9ad8"/><rect x="2" y="12" width="5" height="1" fill="#3d9ad8"/><rect x="9" y="6" width="2" height="1" fill="#3d9ad8"/><rect x="9" y="8" width="2" height="1" fill="#3d9ad8"/><rect x="9" y="10" width="2" height="1" fill="#3d9ad8"/><rect x="9" y="12" width="2" height="1" fill="#3d9ad8"/></svg><div class="t" style="left:58px;top:269px;"><i style="width:9px">C</i><i style="width:7px">o</i><i style="width:7px">n</i><i style="width:3px">t</i><i style="width:3px">i</i><i style="width:7px">n</i><i style="width:7px">u</i><i style="width:7px">o</i><i style="width:7px">u</i><i style="width:6px">s</i><i style="width:3px">&nbsp;</i><i style="width:7px">F</i><i style="width:4px">r</i><i style="width:7px">o</i><i style="width:10px">m</i><i style="width:3px">&nbsp;</i><i style="width:10px">M</i><i style="width:7px">e</i><i style="width:7px">a</i><i style="width:6px">s</i><i style="width:7px">u</i><i style="width:4px">r</i><i style="width:7px">e</i></div><svg style="position:absolute;left:22px;top:293px" width="11" height="11" viewBox="0 0 11 11" shape-rendering="crispEdges" ><rect x="0.5" y="0.5" width="10" height="10" fill="#fff" stroke="#6f8fc2" stroke-width="1"/><rect x="3" y="5" width="5" height="1" fill="#6f8fc2"/></svg><svg style="position:absolute;left:40px;top:291px" width="13" height="16" viewBox="0 0 13 16" shape-rendering="crispEdges" ><path d="M0 0 H8 L13 5 V16 H0 Z" fill="#fff" shape-rendering="crispEdges"/><g shape-rendering="crispEdges"><rect x="0" y="0" width="1" height="16" fill="#5c5c5c"/><rect x="0" y="15" width="13" height="1" fill="#5c5c5c"/><rect x="0" y="0" width="9" height="1" fill="#5c5c5c"/><rect x="12" y="4" width="1" height="12" fill="#5c5c5c"/><rect x="8" y="0" width="1" height="5" fill="#5c5c5c"/><rect x="8" y="4" width="5" height="1" fill="#5c5c5c"/></g><path d="M8.5 0.5 L12.5 4.5" stroke="#5c5c5c" stroke-width="1" fill="none" shape-rendering="auto"/><rect x="2" y="3" width="5" height="1" fill="#3d9ad8"/><rect x="2" y="6" width="5" height="1" fill="#3d9ad8"/><rect x="2" y="8" width="6" height="1" fill="#3d9ad8"/><rect x="2" y="10" width="6" height="1" fill="#3d9ad8"/><rect x="2" y="12" width="5" height="1" fill="#3d9ad8"/><rect x="9" y="6" width="2" height="1" fill="#3d9ad8"/><rect x="9" y="8" width="2" height="1" fill="#3d9ad8"/><rect x="9" y="10" width="2" height="1" fill="#3d9ad8"/><rect x="9" y="12" width="2" height="1" fill="#3d9ad8"/></svg><div class="t" style="left:58px;top:291px;"><i style="width:9px">C</i><i style="width:7px">o</i><i style="width:7px">n</i><i style="width:3px">t</i><i style="width:3px">i</i><i style="width:7px">n</i><i style="width:7px">u</i><i style="width:7px">o</i><i style="width:7px">u</i><i style="width:6px">s</i><i style="width:3px">&nbsp;</i><i style="width:9px">R</i><i style="width:7px">o</i><i style="width:7px">u</i><i style="width:3px">t</i><i style="width:7px">e</i><i style="width:3px">&nbsp;</i><i style="width:3px">I</i><i style="width:9px">D</i></div><svg style="position:absolute;left:22px;top:315px" width="11" height="11" viewBox="0 0 11 11" shape-rendering="crispEdges" ><rect x="0.5" y="0.5" width="10" height="10" fill="#fff" stroke="#6f8fc2" stroke-width="1"/><rect x="3" y="5" width="5" height="1" fill="#6f8fc2"/></svg><svg style="position:absolute;left:40px;top:313px" width="13" height="16" viewBox="0 0 13 16" shape-rendering="crispEdges" ><path d="M0 0 H8 L13 5 V16 H0 Z" fill="#fff" shape-rendering="crispEdges"/><g shape-rendering="crispEdges"><rect x="0" y="0" width="1" height="16" fill="#5c5c5c"/><rect x="0" y="15" width="13" height="1" fill="#5c5c5c"/><rect x="0" y="0" width="9" height="1" fill="#5c5c5c"/><rect x="12" y="4" width="1" height="12" fill="#5c5c5c"/><rect x="8" y="0" width="1" height="5" fill="#5c5c5c"/><rect x="8" y="4" width="5" height="1" fill="#5c5c5c"/></g><path d="M8.5 0.5 L12.5 4.5" stroke="#5c5c5c" stroke-width="1" fill="none" shape-rendering="auto"/><rect x="2" y="3" width="5" height="1" fill="#3d9ad8"/><rect x="2" y="6" width="5" height="1" fill="#3d9ad8"/><rect x="2" y="8" width="6" height="1" fill="#3d9ad8"/><rect x="2" y="10" width="6" height="1" fill="#3d9ad8"/><rect x="2" y="12" width="5" height="1" fill="#3d9ad8"/><rect x="9" y="6" width="2" height="1" fill="#3d9ad8"/><rect x="9" y="8" width="2" height="1" fill="#3d9ad8"/><rect x="9" y="10" width="2" height="1" fill="#3d9ad8"/><rect x="9" y="12" width="2" height="1" fill="#3d9ad8"/></svg><div class="t" style="left:58px;top:313px;"><i style="width:9px">C</i><i style="width:7px">o</i><i style="width:7px">n</i><i style="width:3px">t</i><i style="width:3px">i</i><i style="width:7px">n</i><i style="width:7px">u</i><i style="width:7px">o</i><i style="width:7px">u</i><i style="width:6px">s</i><i style="width:3px">&nbsp;</i><i style="width:9px">R</i><i style="width:7px">o</i><i style="width:7px">u</i><i style="width:3px">t</i><i style="width:7px">e</i><i style="width:3px">&nbsp;</i><i style="width:9px">N</i><i style="width:7px">a</i><i style="width:10px">m</i><i style="width:7px">e</i></div><svg style="position:absolute;left:22px;top:337px" width="11" height="11" viewBox="0 0 11 11" shape-rendering="crispEdges" ><rect x="0.5" y="0.5" width="10" height="10" fill="#fff" stroke="#6f8fc2" stroke-width="1"/><rect x="3" y="5" width="5" height="1" fill="#6f8fc2"/></svg><svg style="position:absolute;left:40px;top:335px" width="13" height="16" viewBox="0 0 13 16" shape-rendering="crispEdges" ><path d="M0 0 H8 L13 5 V16 H0 Z" fill="#fff" shape-rendering="crispEdges"/><g shape-rendering="crispEdges"><rect x="0" y="0" width="1" height="16" fill="#5c5c5c"/><rect x="0" y="15" width="13" height="1" fill="#5c5c5c"/><rect x="0" y="0" width="9" height="1" fill="#5c5c5c"/><rect x="12" y="4" width="1" height="12" fill="#5c5c5c"/><rect x="8" y="0" width="1" height="5" fill="#5c5c5c"/><rect x="8" y="4" width="5" height="1" fill="#5c5c5c"/></g><path d="M8.5 0.5 L12.5 4.5" stroke="#5c5c5c" stroke-width="1" fill="none" shape-rendering="auto"/><rect x="2" y="3" width="5" height="1" fill="#3d9ad8"/><rect x="2" y="6" width="5" height="1" fill="#3d9ad8"/><rect x="2" y="8" width="6" height="1" fill="#3d9ad8"/><rect x="2" y="10" width="6" height="1" fill="#3d9ad8"/><rect x="2" y="12" width="5" height="1" fill="#3d9ad8"/><rect x="9" y="6" width="2" height="1" fill="#3d9ad8"/><rect x="9" y="8" width="2" height="1" fill="#3d9ad8"/><rect x="9" y="10" width="2" height="1" fill="#3d9ad8"/><rect x="9" y="12" width="2" height="1" fill="#3d9ad8"/></svg><div class="t" style="left:58px;top:335px;"><i style="width:9px">C</i><i style="width:7px">o</i><i style="width:7px">n</i><i style="width:3px">t</i><i style="width:3px">i</i><i style="width:7px">n</i><i style="width:7px">u</i><i style="width:7px">o</i><i style="width:7px">u</i><i style="width:6px">s</i><i style="width:3px">&nbsp;</i><i style="width:7px">T</i><i style="width:7px">o</i><i style="width:3px">&nbsp;</i><i style="width:10px">M</i><i style="width:7px">e</i><i style="width:7px">a</i><i style="width:6px">s</i><i style="width:7px">u</i><i style="width:4px">r</i><i style="width:7px">e</i></div></div>
<div style="position:absolute;left:276px;top:109px;width:16px;height:342px;background:#f0f0f0"></div>
<div style="position:absolute;left:278px;top:136px;width:13px;height:194px;background:#c1c1c1"></div>
<svg style="position:absolute;left:280px;top:115px" width="9" height="4" viewBox="0 0 9 4" shape-rendering="crispEdges" ><path d="M4.5 0 L8.5 4 H0.5 Z" fill="#505050" shape-rendering="auto"/></svg>
<svg style="position:absolute;left:280px;top:441px" width="9" height="4" viewBox="0 0 9 4" shape-rendering="crispEdges" ><path d="M0.5 0 H8.5 L4.5 4 Z" fill="#505050" shape-rendering="auto"/></svg>
<div style="position:absolute;left:309px;top:107px;width:275px;height:344px;border:1px solid #000;background:#fff"></div>
<svg style="position:absolute;left:313px;top:114px" width="11" height="11" viewBox="0 0 11 11" shape-rendering="crispEdges" ><rect x="0.5" y="0.5" width="10" height="10" fill="#fff" stroke="#6f8fc2" stroke-width="1"/><rect x="3" y="5" width="5" height="1" fill="#6f8fc2"/></svg>
<svg style="position:absolute;left:329px;top:114px" width="16" height="12" viewBox="0 0 16 12" shape-rendering="crispEdges" ><path d="M0 1 H2 V0 H7 V1 H14 V12 H0 Z" fill="#d8c34a"/><rect x="1" y="2" width="12" height="6" fill="#f6f5ee"/><path d="M2 5.2 H8.1 L8.5 4 H16 L14 12 H0 Z" fill="#d8c34a" shape-rendering="auto"/></svg>
<div class="t" style="left:349px;top:112px;"><i style="width:9px">O</i><i style="width:3px">t</i><i style="width:7px">h</i><i style="width:7px">e</i><i style="width:4px">r</i><i style="width:3px">&nbsp;</i><i style="width:8px">A</i><i style="width:3px">t</i><i style="width:3px">t</i><i style="width:4px">r</i><i style="width:3px">i</i><i style="width:7px">b</i><i style="width:7px">u</i><i style="width:3px">t</i><i style="width:7px">e</i><i style="width:6px">s</i></div>
<svg style="position:absolute;left:332px;top:136px" width="11" height="11" viewBox="0 0 11 11" shape-rendering="crispEdges" ><rect x="0.5" y="0.5" width="10" height="10" fill="#fff" stroke="#6f8fc2" stroke-width="1"/><rect x="3" y="5" width="5" height="1" fill="#6f8fc2"/></svg>
<svg style="position:absolute;left:348px;top:135px" width="17" height="15" viewBox="0 0 17 15" shape-rendering="crispEdges" ><path d="M2 0.3 Q6 1 8 0.6 T14 0 L16 14 Q12 13 8 14 T0 14 Z" fill="#d8c34a" shape-rendering="auto"/><path d="M5.5 3 L5.7 12.2 M8.6 2 L10.4 10.8 M3 6.4 H13 M3 8.6 H13" stroke="#f5eec4" stroke-width="3.2" fill="none" stroke-linecap="square" shape-rendering="auto"/><path d="M5.5 3 L5.7 12.2 M8.6 2 L10.4 10.8 M3 6.4 H13 M3 8.6 H13" stroke="#5a5a5a" stroke-width="1.1" fill="none" shape-rendering="auto"/></svg>
<div class="t" style="left:368px;top:134px;"><i style="width:8px">P</i><i style="width:7px">_</i><i style="width:10px">M</i><i style="width:8px">A</i><i style="width:9px">O</i><i style="width:8px">P</i><i style="width:9px">C</i><i style="width:7px">a</i><i style="width:3px">l</i><i style="width:6px">c</i><i style="width:9px">R</i><i style="width:7px">a</i><i style="width:7px">n</i><i style="width:7px">g</i><i style="width:7px">e</i></div>
<svg style="position:absolute;left:351px;top:158px" width="11" height="11" viewBox="0 0 11 11" shape-rendering="crispEdges" ><rect x="0.5" y="0.5" width="10" height="10" fill="#fff" stroke="#6f8fc2" stroke-width="1"/><rect x="3" y="5" width="5" height="1" fill="#6f8fc2"/></svg>
<svg style="position:absolute;left:369px;top:156px" width="13" height="16" viewBox="0 0 13 16" shape-rendering="crispEdges" ><path d="M0 0 H8 L13 5 V16 H0 Z" fill="#fff" shape-rendering="crispEdges"/><g shape-rendering="crispEdges"><rect x="0" y="0" width="1" height="16" fill="#5c5c5c"/><rect x="0" y="15" width="13" height="1" fill="#5c5c5c"/><rect x="0" y="0" width="9" height="1" fill="#5c5c5c"/><rect x="12" y="4" width="1" height="12" fill="#5c5c5c"/><rect x="8" y="0" width="1" height="5" fill="#5c5c5c"/><rect x="8" y="4" width="5" height="1" fill="#5c5c5c"/></g><path d="M8.5 0.5 L12.5 4.5" stroke="#5c5c5c" stroke-width="1" fill="none" shape-rendering="auto"/><rect x="2" y="3" width="5" height="1" fill="#3d9ad8"/><rect x="2" y="6" width="5" height="1" fill="#3d9ad8"/><rect x="2" y="8" width="6" height="1" fill="#3d9ad8"/><rect x="2" y="10" width="6" height="1" fill="#3d9ad8"/><rect x="2" y="12" width="5" height="1" fill="#3d9ad8"/><rect x="9" y="6" width="2" height="1" fill="#3d9ad8"/><rect x="9" y="8" width="2" height="1" fill="#3d9ad8"/><rect x="9" y="10" width="2" height="1" fill="#3d9ad8"/><rect x="9" y="12" width="2" height="1" fill="#3d9ad8"/></svg>
<div class="t" style="left:387px;top:156px;"><i style="width:10px">M</i><i style="width:8px">A</i><i style="width:9px">O</i><i style="width:8px">P</i><i style="width:3px">&nbsp;</i><i style="width:7px">T</i><i style="width:7px">e</i><i style="width:6px">s</i><i style="width:3px">t</i><i style="width:3px">&nbsp;</i><i style="width:8px">P</i><i style="width:4px">r</i><i style="width:7px">e</i><i style="width:6px">s</i><i style="width:6px">s</i><i style="width:7px">u</i><i style="width:4px">r</i><i style="width:7px">e</i></div>
<svg style="position:absolute;left:351px;top:180px" width="11" height="11" viewBox="0 0 11 11" shape-rendering="crispEdges" ><rect x="0.5" y="0.5" width="10" height="10" fill="#fff" stroke="#6f8fc2" stroke-width="1"/><rect x="3" y="5" width="5" height="1" fill="#6f8fc2"/></svg>
<svg style="position:absolute;left:369px;top:178px" width="13" height="16" viewBox="0 0 13 16" shape-rendering="crispEdges" ><path d="M0 0 H8 L13 5 V16 H0 Z" fill="#fff" shape-rendering="crispEdges"/><g shape-rendering="crispEdges"><rect x="0" y="0" width="1" height="16" fill="#5c5c5c"/><rect x="0" y="15" width="13" height="1" fill="#5c5c5c"/><rect x="0" y="0" width="9" height="1" fill="#5c5c5c"/><rect x="12" y="4" width="1" height="12" fill="#5c5c5c"/><rect x="8" y="0" width="1" height="5" fill="#5c5c5c"/><rect x="8" y="4" width="5" height="1" fill="#5c5c5c"/></g><path d="M8.5 0.5 L12.5 4.5" stroke="#5c5c5c" stroke-width="1" fill="none" shape-rendering="auto"/><rect x="2" y="3" width="5" height="1" fill="#3d9ad8"/><rect x="2" y="6" width="5" height="1" fill="#3d9ad8"/><rect x="2" y="8" width="6" height="1" fill="#3d9ad8"/><rect x="2" y="10" width="6" height="1" fill="#3d9ad8"/><rect x="2" y="12" width="5" height="1" fill="#3d9ad8"/><rect x="9" y="6" width="2" height="1" fill="#3d9ad8"/><rect x="9" y="8" width="2" height="1" fill="#3d9ad8"/><rect x="9" y="10" width="2" height="1" fill="#3d9ad8"/><rect x="9" y="12" width="2" height="1" fill="#3d9ad8"/></svg>
<div class="t" style="left:387px;top:178px;"><i style="width:10px">M</i><i style="width:8px">A</i><i style="width:9px">O</i><i style="width:8px">P</i><i style="width:3px">&nbsp;</i><i style="width:9px">D</i><i style="width:7px">e</i><i style="width:6px">s</i><i style="width:3px">i</i><i style="width:7px">g</i><i style="width:7px">n</i><i style="width:3px">&nbsp;</i><i style="width:8px">P</i><i style="width:4px">r</i><i style="width:7px">e</i><i style="width:6px">s</i><i style="width:6px">s</i><i style="width:7px">u</i><i style="width:4px">r</i><i style="width:7px">e</i></div>
<svg style="position:absolute;left:332px;top:202px" width="11" height="11" viewBox="0 0 11 11" shape-rendering="crispEdges" ><rect x="0.5" y="0.5" width="10" height="10" fill="#fff" stroke="#6f8fc2" stroke-width="1"/><rect x="3" y="5" width="5" height="1" fill="#6f8fc2"/></svg>
<svg style="position:absolute;left:348px;top:201px" width="17" height="15" viewBox="0 0 17 15" shape-rendering="crispEdges" ><path d="M2 0.3 Q6 1 8 0.6 T14 0 L16 14 Q12 13 8 14 T0 14 Z" fill="#d8c34a" shape-rendering="auto"/><path d="M5.5 3 L5.7 12.2 M8.6 2 L10.4 10.8 M3 6.4 H13 M3 8.6 H13" stroke="#f5eec4" stroke-width="3.2" fill="none" stroke-linecap="square" shape-rendering="auto"/><path d="M5.5 3 L5.7 12.2 M8.6 2 L10.4 10.8 M3 6.4 H13 M3 8.6 H13" stroke="#5a5a5a" stroke-width="1.1" fill="none" shape-rendering="auto"/></svg>
<div class="t" style="left:368px;top:200px;"><i style="width:8px">P</i><i style="width:7px">_</i><i style="width:7px">T</i><i style="width:7px">e</i><i style="width:6px">s</i><i style="width:3px">t</i><i style="width:8px">P</i><i style="width:4px">r</i><i style="width:7px">e</i><i style="width:6px">s</i><i style="width:6px">s</i><i style="width:7px">u</i><i style="width:4px">r</i><i style="width:7px">e</i><i style="width:9px">R</i><i style="width:7px">a</i><i style="width:7px">n</i><i style="width:7px">g</i><i style="width:7px">e</i></div>
<svg style="position:absolute;left:351px;top:224px" width="11" height="11" viewBox="0 0 11 11" shape-rendering="crispEdges" ><rect x="0.5" y="0.5" width="10" height="10" fill="#fff" stroke="#6f8fc2" stroke-width="1"/><rect x="3" y="5" width="5" height="1" fill="#6f8fc2"/></svg>
<svg style="position:absolute;left:369px;top:222px" width="13" height="16" viewBox="0 0 13 16" shape-rendering="crispEdges" ><path d="M0 0 H8 L13 5 V16 H0 Z" fill="#fff" shape-rendering="crispEdges"/><g shape-rendering="crispEdges"><rect x="0" y="0" width="1" height="16" fill="#5c5c5c"/><rect x="0" y="15" width="13" height="1" fill="#5c5c5c"/><rect x="0" y="0" width="9" height="1" fill="#5c5c5c"/><rect x="12" y="4" width="1" height="12" fill="#5c5c5c"/><rect x="8" y="0" width="1" height="5" fill="#5c5c5c"/><rect x="8" y="4" width="5" height="1" fill="#5c5c5c"/></g><path d="M8.5 0.5 L12.5 4.5" stroke="#5c5c5c" stroke-width="1" fill="none" shape-rendering="auto"/><rect x="2" y="3" width="5" height="1" fill="#3d9ad8"/><rect x="2" y="6" width="5" height="1" fill="#3d9ad8"/><rect x="2" y="8" width="6" height="1" fill="#3d9ad8"/><rect x="2" y="10" width="6" height="1" fill="#3d9ad8"/><rect x="2" y="12" width="5" height="1" fill="#3d9ad8"/><rect x="9" y="6" width="2" height="1" fill="#3d9ad8"/><rect x="9" y="8" width="2" height="1" fill="#3d9ad8"/><rect x="9" y="10" width="2" height="1" fill="#3d9ad8"/><rect x="9" y="12" width="2" height="1" fill="#3d9ad8"/></svg>
<div class="t" style="left:387px;top:222px;"><i style="width:7px">T</i><i style="width:7px">e</i><i style="width:6px">s</i><i style="width:3px">t</i><i style="width:3px">&nbsp;</i><i style="width:7px">T</i><i style="width:6px">y</i><i style="width:7px">p</i><i style="width:7px">e</i></div>
<svg style="position:absolute;left:351px;top:246px" width="11" height="11" viewBox="0 0 11 11" shape-rendering="crispEdges" ><rect x="0.5" y="0.5" width="10" height="10" fill="#fff" stroke="#6f8fc2" stroke-width="1"/><rect x="3" y="5" width="5" height="1" fill="#6f8fc2"/></svg>
<svg style="position:absolute;left:369px;top:244px" width="13" height="16" viewBox="0 0 13 16" shape-rendering="crispEdges" ><path d="M0 0 H8 L13 5 V16 H0 Z" fill="#fff" shape-rendering="crispEdges"/><g shape-rendering="crispEdges"><rect x="0" y="0" width="1" height="16" fill="#5c5c5c"/><rect x="0" y="15" width="13" height="1" fill="#5c5c5c"/><rect x="0" y="0" width="9" height="1" fill="#5c5c5c"/><rect x="12" y="4" width="1" height="12" fill="#5c5c5c"/><rect x="8" y="0" width="1" height="5" fill="#5c5c5c"/><rect x="8" y="4" width="5" height="1" fill="#5c5c5c"/></g><path d="M8.5 0.5 L12.5 4.5" stroke="#5c5c5c" stroke-width="1" fill="none" shape-rendering="auto"/><rect x="2" y="3" width="5" height="1" fill="#3d9ad8"/><rect x="2" y="6" width="5" height="1" fill="#3d9ad8"/><rect x="2" y="8" width="6" height="1" fill="#3d9ad8"/><rect x="2" y="10" width="6" height="1" fill="#3d9ad8"/><rect x="2" y="12" width="5" height="1" fill="#3d9ad8"/><rect x="9" y="6" width="2" height="1" fill="#3d9ad8"/><rect x="9" y="8" width="2" height="1" fill="#3d9ad8"/><rect x="9" y="10" width="2" height="1" fill="#3d9ad8"/><rect x="9" y="12" width="2" height="1" fill="#3d9ad8"/></svg>
<div class="t" style="left:387px;top:244px;"><i style="width:7px">T</i><i style="width:7px">e</i><i style="width:6px">s</i><i style="width:3px">t</i><i style="width:3px">&nbsp;</i><i style="width:9px">D</i><i style="width:7px">a</i><i style="width:3px">t</i><i style="width:7px">e</i></div>
<svg style="position:absolute;left:351px;top:268px" width="11" height="11" viewBox="0 0 11 11" shape-rendering="crispEdges" ><rect x="0.5" y="0.5" width="10" height="10" fill="#fff" stroke="#6f8fc2" stroke-width="1"/><rect x="3" y="5" width="5" height="1" fill="#6f8fc2"/></svg>
<svg style="position:absolute;left:369px;top:266px" width="13" height="16" viewBox="0 0 13 16" shape-rendering="crispEdges" ><path d="M0 0 H8 L13 5 V16 H0 Z" fill="#fff" shape-rendering="crispEdges"/><g shape-rendering="crispEdges"><rect x="0" y="0" width="1" height="16" fill="#5c5c5c"/><rect x="0" y="15" width="13" height="1" fill="#5c5c5c"/><rect x="0" y="0" width="9" height="1" fill="#5c5c5c"/><rect x="12" y="4" width="1" height="12" fill="#5c5c5c"/><rect x="8" y="0" width="1" height="5" fill="#5c5c5c"/><rect x="8" y="4" width="5" height="1" fill="#5c5c5c"/></g><path d="M8.5 0.5 L12.5 4.5" stroke="#5c5c5c" stroke-width="1" fill="none" shape-rendering="auto"/><rect x="2" y="3" width="5" height="1" fill="#3d9ad8"/><rect x="2" y="6" width="5" height="1" fill="#3d9ad8"/><rect x="2" y="8" width="6" height="1" fill="#3d9ad8"/><rect x="2" y="10" width="6" height="1" fill="#3d9ad8"/><rect x="2" y="12" width="5" height="1" fill="#3d9ad8"/><rect x="9" y="6" width="2" height="1" fill="#3d9ad8"/><rect x="9" y="8" width="2" height="1" fill="#3d9ad8"/><rect x="9" y="10" width="2" height="1" fill="#3d9ad8"/><rect x="9" y="12" width="2" height="1" fill="#3d9ad8"/></svg>
<div class="t" style="left:387px;top:266px;"><i style="width:8px">P</i><i style="width:4px">r</i><i style="width:7px">e</i><i style="width:6px">s</i><i style="width:6px">s</i><i style="width:7px">u</i><i style="width:4px">r</i><i style="width:7px">e</i><i style="width:3px">&nbsp;</i><i style="width:7px">T</i><i style="width:7px">e</i><i style="width:6px">s</i><i style="width:3px">t</i></div>
<div style="position:absolute;left:17px;top:462px;width:13px;height:13px;border:1px solid #73b2e6;background:#97c8ef"></div>
<svg style="position:absolute;left:17px;top:462px" width="15" height="15" viewBox="0 0 15 15"><path d="M2.2 7.7 L5.7 10.7 L12.4 3.8" stroke="#fff" stroke-width="2.6" fill="none"/></svg>
<div class="t" style="left:37px;top:461px;"><i style="width:3px">I</i><i style="width:7px">n</i><i style="width:6px">c</i><i style="width:3px">l</i><i style="width:7px">u</i><i style="width:7px">d</i><i style="width:7px">e</i><i style="width:3px">&nbsp;</i><i style="width:7px">a</i><i style="width:3px">l</i><i style="width:3px">l</i><i style="width:3px">&nbsp;</i><i style="width:4px">r</i><i style="width:7px">e</i><i style="width:7px">q</i><i style="width:7px">u</i><i style="width:3px">i</i><i style="width:4px">r</i><i style="width:7px">e</i><i style="width:7px">d</i><i style="width:3px">&nbsp;</i><i style="width:3px">f</i><i style="width:3px">i</i><i style="width:7px">e</i><i style="width:3px">l</i><i style="width:7px">d</i><i style="width:6px">s</i><i style="width:3px">&nbsp;</i><i style="width:3px">f</i><i style="width:7px">o</i><i style="width:4px">r</i><i style="width:3px">&nbsp;</i><i style="width:7px">a</i><i style="width:3px">&nbsp;</i><i style="width:3px">l</i><i style="width:7px">a</i><i style="width:6px">y</i><i style="width:7px">e</i><i style="width:4px">r</i></div>
<svg style="position:absolute;left:18px;top:485px;overflow:visible" width="15" height="17" viewBox="0 0 15 17"><path d="M0 0 H8 L13 5 V16 H0 Z" fill="#fff" shape-rendering="crispEdges"/><g shape-rendering="crispEdges"><rect x="0" y="0" width="1" height="16" fill="#606060"/><rect x="0" y="15" width="13" height="1" fill="#606060"/><rect x="0" y="0" width="9" height="1" fill="#606060"/><rect x="12" y="4" width="1" height="12" fill="#606060"/><rect x="8" y="0" width="1" height="5" fill="#606060"/><rect x="8" y="4" width="5" height="1" fill="#606060"/></g><path d="M8.5 0.5 L12.5 4.5" stroke="#606060" stroke-width="1" fill="none" shape-rendering="auto"/><rect x="2" y="4" width="5" height="1" fill="#3d9ad8"/><rect x="2" y="6" width="6" height="1" fill="#3d9ad8"/><rect x="2" y="8" width="4" height="1" fill="#3d9ad8"/><rect x="2" y="10" width="3" height="1" fill="#3d9ad8"/><rect x="2" y="12" width="3" height="1" fill="#3d9ad8"/><circle cx="10.5" cy="11.4" r="5.3" fill="#fff"/><path d="M10.50 11.40 L14.80 11.40 M10.50 11.40 L13.54 14.44 M10.50 11.40 L10.50 15.70 M10.50 11.40 L7.46 14.44 M10.50 11.40 L6.20 11.40 M10.50 11.40 L7.46 8.36 M10.50 11.40 L10.50 7.10 M10.50 11.40 L13.54 8.36 " stroke="#d9603a" stroke-width="1.4" fill="none"/><circle cx="10.5" cy="11.4" r="2.9" fill="#d9603a"/></svg>
<div class="t" style="left:36px;top:485px;"><i style="width:7px">=</i><i style="width:3px">&nbsp;</i><i style="width:9px">R</i><i style="width:7px">e</i><i style="width:7px">q</i><i style="width:7px">u</i><i style="width:3px">i</i><i style="width:4px">r</i><i style="width:7px">e</i><i style="width:7px">d</i><i style="width:3px">&nbsp;</i><i style="width:7px">F</i><i style="width:3px">i</i><i style="width:7px">e</i><i style="width:3px">l</i><i style="width:7px">d</i></div>
<div class="btn" style="left:311px;width:51px"></div><div class="t" style="left:320px;top:467px;"><i style="width:8px">E</i><i style="width:6px">x</i><i style="width:7px">p</i><i style="width:7px">o</i><i style="width:4px">r</i><i style="width:3px">t</i></div>
<div class="btn" style="left:371px;width:50px"></div><div class="t" style="left:380px;top:467px;"><i style="width:3px">I</i><i style="width:10px">m</i><i style="width:7px">p</i><i style="width:7px">o</i><i style="width:4px">r</i><i style="width:3px">t</i></div>
<div class="btn" style="left:481px;width:44px"></div><div class="t" style="left:490px;top:467px;"><i style="width:8px">S</i><i style="width:7px">a</i><i style="width:6px">v</i><i style="width:7px">e</i></div>
<div class="btn" style="left:534px;width:48px"></div><div class="t" style="left:543px;top:467px;"><i style="width:9px">C</i><i style="width:3px">l</i><i style="width:7px">o</i><i style="width:6px">s</i><i style="width:7px">e</i></div>
<svg style="position:absolute;left:586px;top:503px" width="16" height="16" viewBox="0 0 16 16"><circle cx="12.5" cy="4.5" r="1.3" fill="#cfcfcf"/><circle cx="8.5" cy="8.5" r="1.3" fill="#d4d4d4"/><circle cx="12.5" cy="8.5" r="1.3" fill="#9c9c9c"/><circle cx="4.5" cy="12.5" r="1.3" fill="#d0d0d0"/><circle cx="8.5" cy="12.5" r="1.3" fill="#7a7a7a"/><circle cx="12.5" cy="12.5" r="1.3" fill="#000"/></svg>
</body></html>
